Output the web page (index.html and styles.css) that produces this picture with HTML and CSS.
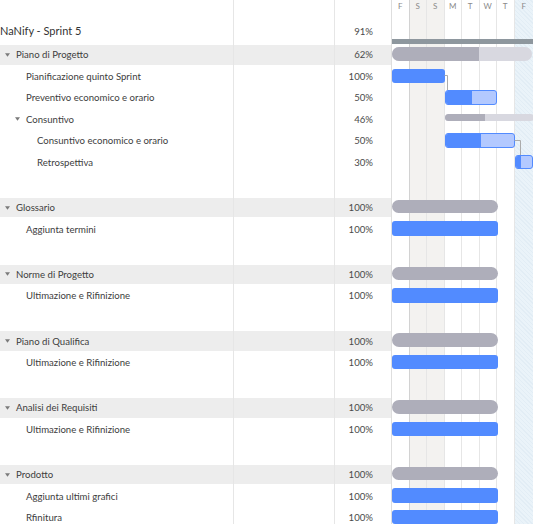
FILE: index.html
```html
<!DOCTYPE html>
<html lang="it">
<head>
<meta charset="utf-8">
<title>NaNify - Sprint 5</title>
<link rel="stylesheet" href="styles.css">
</head>
<body>
<div class="app">
  <div class="list">
    <div class="row head"><div class="c name"></div><div class="c mid"></div><div class="c pct"></div></div>
    <div class="row title"><div class="c name">NaNify - Sprint 5</div><div class="c mid"></div><div class="c pct">91%</div></div>

    <div class="row group"><div class="c name l0"><svg class="caret" viewBox="0 0 6 4"><path d="M0 0h6L3 4z"/></svg>Piano di Progetto</div><div class="c mid"></div><div class="c pct">62%</div></div>
    <div class="row"><div class="c name l1">Pianificazione quinto Sprint</div><div class="c mid"></div><div class="c pct">100%</div></div>
    <div class="row"><div class="c name l1">Preventivo economico e orario</div><div class="c mid"></div><div class="c pct">50%</div></div>
    <div class="row"><div class="c name l1c"><svg class="caret" viewBox="0 0 6 4"><path d="M0 0h6L3 4z"/></svg>Consuntivo</div><div class="c mid"></div><div class="c pct">46%</div></div>
    <div class="row"><div class="c name l2">Consuntivo economico e orario</div><div class="c mid"></div><div class="c pct">50%</div></div>
    <div class="row"><div class="c name l2">Retrospettiva</div><div class="c mid"></div><div class="c pct">30%</div></div>
    <div class="row spacer"><div class="c name"></div><div class="c mid"></div><div class="c pct"></div></div>

    <div class="row group"><div class="c name l0"><svg class="caret" viewBox="0 0 6 4"><path d="M0 0h6L3 4z"/></svg>Glossario</div><div class="c mid"></div><div class="c pct">100%</div></div>
    <div class="row"><div class="c name l1">Aggiunta termini</div><div class="c mid"></div><div class="c pct">100%</div></div>
    <div class="row spacer"><div class="c name"></div><div class="c mid"></div><div class="c pct"></div></div>

    <div class="row group"><div class="c name l0"><svg class="caret" viewBox="0 0 6 4"><path d="M0 0h6L3 4z"/></svg>Norme di Progetto</div><div class="c mid"></div><div class="c pct">100%</div></div>
    <div class="row"><div class="c name l1">Ultimazione e Rifinizione</div><div class="c mid"></div><div class="c pct">100%</div></div>
    <div class="row spacer"><div class="c name"></div><div class="c mid"></div><div class="c pct"></div></div>

    <div class="row group"><div class="c name l0"><svg class="caret" viewBox="0 0 6 4"><path d="M0 0h6L3 4z"/></svg>Piano di Qualifica</div><div class="c mid"></div><div class="c pct">100%</div></div>
    <div class="row"><div class="c name l1">Ultimazione e Rifinizione</div><div class="c mid"></div><div class="c pct">100%</div></div>
    <div class="row spacer"><div class="c name"></div><div class="c mid"></div><div class="c pct"></div></div>

    <div class="row group"><div class="c name l0"><svg class="caret" viewBox="0 0 6 4"><path d="M0 0h6L3 4z"/></svg>Analisi dei Requisiti</div><div class="c mid"></div><div class="c pct">100%</div></div>
    <div class="row"><div class="c name l1">Ultimazione e Rifinizione</div><div class="c mid"></div><div class="c pct">100%</div></div>
    <div class="row spacer"><div class="c name"></div><div class="c mid"></div><div class="c pct"></div></div>

    <div class="row group"><div class="c name l0"><svg class="caret" viewBox="0 0 6 4"><path d="M0 0h6L3 4z"/></svg>Prodotto</div><div class="c mid"></div><div class="c pct">100%</div></div>
    <div class="row"><div class="c name l1">Aggiunta ultimi grafici</div><div class="c mid"></div><div class="c pct">100%</div></div>
    <div class="row"><div class="c name l1">Rfinitura</div><div class="c mid"></div><div class="c pct">100%</div></div>
  </div>

  <div class="chart">
    <div class="days">
      <div class="day fri"><span>F</span></div>
      <div class="day weekend"><span>S</span></div>
      <div class="day weekend"><span>S</span></div>
      <div class="day"><span>M</span></div>
      <div class="day"><span>T</span></div>
      <div class="day"><span>W</span></div>
      <div class="day"><span>T</span></div>
      <div class="day today"><span>F</span></div>
    </div>

    <div class="bars">
      <div class="brow head"></div>
      <div class="brow title"><div class="project"></div></div>

      <div class="brow"><div class="summary" style="left:0;width:140px"><div class="done" style="width:62%"></div></div></div>
      <div class="brow"><div class="task" style="left:0;width:52.5px"></div></div>
      <div class="brow"><div class="task part" style="left:52.5px;width:52.5px"><div class="done" style="width:52%"></div></div></div>
      <div class="brow"><div class="summary thin" style="left:52.5px;width:89px"><div class="done" style="width:46%"></div></div></div>
      <div class="brow"><div class="task part" style="left:52.5px;width:70px"><div class="done" style="width:52%"></div></div></div>
      <div class="brow"><div class="task part" style="left:122.5px;width:18px"><div class="done" style="width:36%"></div></div></div>
      <div class="brow spacer"></div>

      <div class="brow"><div class="summary full" style="left:0;width:105.5px"></div></div>
      <div class="brow"><div class="task" style="left:0;width:105.5px"></div></div>
      <div class="brow spacer"></div>

      <div class="brow"><div class="summary full" style="left:0;width:105.5px"></div></div>
      <div class="brow"><div class="task" style="left:0;width:105.5px"></div></div>
      <div class="brow spacer"></div>

      <div class="brow"><div class="summary full" style="left:0;width:105.5px"></div></div>
      <div class="brow"><div class="task" style="left:0;width:105.5px"></div></div>
      <div class="brow spacer"></div>

      <div class="brow"><div class="summary full" style="left:0;width:105.5px"></div></div>
      <div class="brow"><div class="task" style="left:0;width:105.5px"></div></div>
      <div class="brow spacer"></div>

      <div class="brow"><div class="summary full" style="left:0;width:105.5px"></div></div>
      <div class="brow"><div class="task" style="left:0;width:105.5px"></div></div>
      <div class="brow"><div class="task" style="left:0;width:105.5px"></div></div>
    </div>

    <svg class="links" width="141" height="524" viewBox="0 0 141 524">
      <polyline points="52.5,75.5 55.5,75.5 55.5,90"/>
      <polyline points="122.5,140.5 128.5,140.5 128.5,155"/>
    </svg>
  </div>
</div>
</body>
</html>
```

FILE: styles.css
```css
* { box-sizing: border-box; }

html, body {
  margin: 0;
  padding: 0;
  background: #fff;
  overflow: hidden;
}

body {
  font-family: "Lato", "Liberation Sans", sans-serif;
  font-size: 9.6px;
  color: #3d3d3d;
  width: 533px;
  height: 524px;
}

.app {
  display: flex;
  height: 524px;
}

/* ---------- left list ---------- */
.list {
  width: 392px;
  flex: none;
  display: flex;
  flex-direction: column;
  height: 524px;
}

.row {
  display: grid;
  grid-template-columns: 234px 101px 57px;
  height: 21.5px;
  flex: none;
  padding: 1px 0 1px;
  background-clip: content-box;
}

.row.head { height: 22px; padding: 0; }
.row.title { height: 22px; padding: 0; }
.row.spacer { height: 23.8px; }
.row.group { background-color: #ededed; }

.c {
  border-right: 1px solid #e6e6e6;
  display: flex;
  align-items: center;
  white-space: nowrap;
  overflow: hidden;
  margin: -1px 0;
}
.row.head .c, .row.title .c { margin: 0; }

.c.pct {
  justify-content: flex-end;
  padding-right: 18px;
  color: #4a4a4a;
  border-right-color: #dedede;
}

.row.title .c { align-items: flex-start; padding-top: 2px; }
.row.title .name { font-size: 11px; color: #333; }
.row.title .pct { padding-top: 4px; }

.name.l0 { padding-left: 5px; }
.name.l1 { padding-left: 26px; }
.name.l1c { padding-left: 15px; }
.name.l2 { padding-left: 37px; }

.caret {
  width: 5px;
  height: 4px;
  margin-right: 6px;
  fill: #7a7a7a;
  flex: none;
}

/* ---------- chart ---------- */
.chart {
  position: relative;
  flex: 1;
  height: 524px;
  overflow: hidden;
}

.days {
  display: flex;
  height: 100%;
}

.day {
  width: 17.5px;
  flex: none;
  border-right: 1px solid #e6e6e6;
  display: flex;
  justify-content: center;
  align-items: flex-start;
}
.day span {
  font-size: 8px;
  color: #8a8a8a;
  line-height: 8px;
  margin-top: 2px;
  letter-spacing: 0.2px;
}
.day.fri { border-right-color: #d2d2d2; }
.day.weekend { background: #f3f2f0; }
.day.today {
  flex: 1;
  border-right: none;
  background-color: #eaf3f9;
  background-image: repeating-linear-gradient(45deg, #e2edf5 0 1px, transparent 1px 3px);
}

.bars {
  position: absolute;
  inset: 0;
  display: flex;
  flex-direction: column;
}

.brow {
  position: relative;
  height: 21.5px;
  flex: none;
}
.brow.head { height: 22px; }
.brow.title { height: 22px; }
.brow.spacer { height: 23.8px; }

.project {
  position: absolute;
  left: 0;
  right: 0;
  top: 17px;
  height: 5px;
  background: #8e979e;
}

.summary {
  position: absolute;
  top: 3px;
  height: 13.5px;
  border-radius: 7px;
  background: #d8d8e0;
  overflow: hidden;
}
.summary .done {
  height: 100%;
  background: #aeaeba;
}
.summary.full { background: #aeaeba; }
.summary.thin {
  top: 5.5px;
  height: 7px;
  border-radius: 4px;
}

.task {
  position: absolute;
  top: 3px;
  height: 14.5px;
  border-radius: 3px;
  background: #528bff;
  overflow: hidden;
}
.task.part {
  background: #b3c9ff;
  border: 1px solid #528bff;
}
.task .done {
  height: 100%;
  background: #528bff;
}

.links {
  position: absolute;
  left: 0;
  top: 0;
  pointer-events: none;
}
.links polyline {
  fill: none;
  stroke: #ababab;
  stroke-width: 1;
}
```
